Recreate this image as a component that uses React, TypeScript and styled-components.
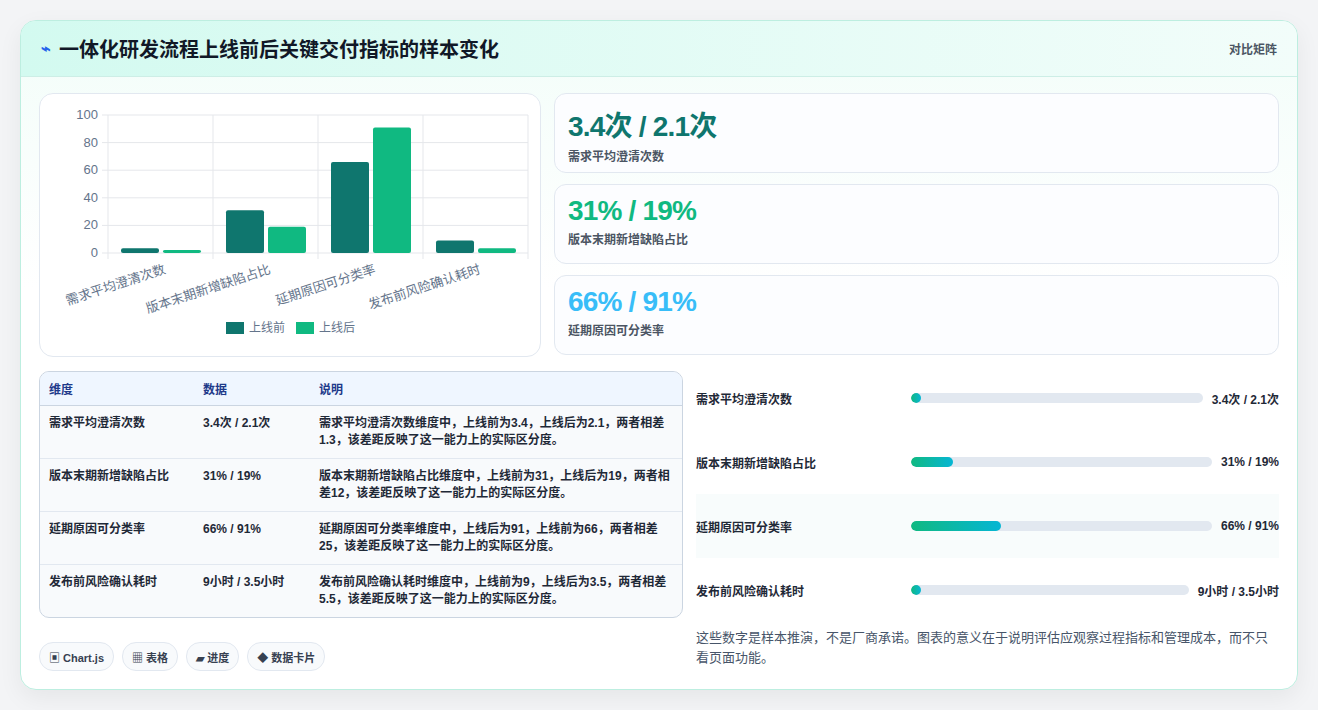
import styled, { createGlobalStyle } from 'styled-components';

const GlobalStyle = createGlobalStyle`
  body {
    margin: 0;
    background: #f3f4f6;
    font-family: "Liberation Sans", "Noto Sans CJK SC", sans-serif;
  }
`;

const rows = [
  { name: '需求平均澄清次数', data: '3.4次 / 2.1次', before: 3.4, after: 2.1, pct: 1, desc: '需求平均澄清次数维度中，上线前为3.4，上线后为2.1，两者相差1.3，该差距反映了这一能力上的实际区分度。' },
  { name: '版本末期新增缺陷占比', data: '31% / 19%', before: 31, after: 19, pct: 14, desc: '版本末期新增缺陷占比维度中，上线前为31，上线后为19，两者相差12，该差距反映了这一能力上的实际区分度。' },
  { name: '延期原因可分类率', data: '66% / 91%', before: 66, after: 91, pct: 30, desc: '延期原因可分类率维度中，上线后为91，上线前为66，两者相差25，该差距反映了这一能力上的实际区分度。' },
  { name: '发布前风险确认耗时', data: '9小时 / 3.5小时', before: 9, after: 3.5, pct: 1, desc: '发布前风险确认耗时维度中，上线前为9，上线后为3.5，两者相差5.5，该差距反映了这一能力上的实际区分度。' },
];

const stats = [
  { value: '3.4次 / 2.1次', label: '需求平均澄清次数', color: '#0f766e' },
  { value: '31% / 19%', label: '版本末期新增缺陷占比', color: '#10b981' },
  { value: '66% / 91%', label: '延期原因可分类率', color: '#38bdf8' },
];

function Chart() {
  const x0 = 68, y0 = 159, w = 420, scale = 1.38;
  const cw = w / 4;
  return (
    <svg width="500" height="262" viewBox="0 0 500 262">
      {[0, 20, 40, 60, 80, 100].map(v => (
        <g key={v}>
          <line x1={x0 - 6} x2={x0 + w} y1={y0 - v * scale} y2={y0 - v * scale} stroke="#e5e7eb" />
          <text x={x0 - 10} y={y0 - v * scale + 4} textAnchor="end" fontSize="13" fill="#64748b">{v}</text>
        </g>
      ))}
      {[0, 1, 2, 3, 4].map(i => (
        <line key={i} x1={x0 + i * cw} x2={x0 + i * cw} y1={y0 - 138} y2={y0 + 6} stroke="#e5e7eb" />
      ))}
      {rows.map((r, i) => {
        const bx = x0 + i * cw + 13;
        const lx = x0 + i * cw + cw / 2 + 6;
        return (
          <g key={r.name}>
            <rect x={bx} y={y0 - r.before * scale} width="38" height={r.before * scale} rx="2" fill="#0f766e" />
            <rect x={bx + 42} y={y0 - r.after * scale} width="38" height={r.after * scale} rx="2" fill="#10b981" />
            <text x={lx} y={y0 + 20} textAnchor="end" fontSize="13" fill="#64748b"
              transform={`rotate(-18 ${lx} ${y0 + 20})`}>{r.name}</text>
          </g>
        );
      })}
      <rect x="186" y="228" width="18" height="12" fill="#0f766e" />
      <text x="209" y="238" fontSize="12" fill="#64748b">上线前</text>
      <rect x="256" y="228" width="18" height="12" fill="#10b981" />
      <text x="279" y="238" fontSize="12" fill="#64748b">上线后</text>
    </svg>
  );
}

export default function App() {
  return (
    <Page>
      <GlobalStyle />
      <Card>
        <Header>
          <Title><Bolt>⌁</Bolt>一体化研发流程上线前后关键交付指标的样本变化</Title>
          <HeaderTag>对比矩阵</HeaderTag>
        </Header>
        <Body>
          <TopRow>
            <ChartPanel><Chart /></ChartPanel>
            <StatList>
              {stats.map(s => (
                <Stat key={s.label}>
                  <StatValue $color={s.color}>{s.value}</StatValue>
                  <StatLabel>{s.label}</StatLabel>
                </Stat>
              ))}
            </StatList>
          </TopRow>
          <BottomRow>
            <LeftCol>
              <Table>
                <colgroup>
                  <col style={{ width: 154 }} />
                  <col style={{ width: 116 }} />
                  <col />
                </colgroup>
                <thead>
                  <tr><Th>维度</Th><Th>数据</Th><Th>说明</Th></tr>
                </thead>
                <tbody>
                  {rows.map(r => (
                    <tr key={r.name}><Td>{r.name}</Td><Td>{r.data}</Td><Td>{r.desc}</Td></tr>
                  ))}
                </tbody>
              </Table>
              <Chips>
                <Chip>▣ Chart.js</Chip>
                <Chip>▦ 表格</Chip>
                <Chip>▰ 进度</Chip>
                <Chip>◆ 数据卡片</Chip>
              </Chips>
            </LeftCol>
            <RightCol>
              <Bars>
                {rows.map((r, i) => (
                  <BarRow key={r.name} $alt={i === 2}>
                    <BarName>{r.name}</BarName>
                    <Track><Fill style={{ width: `${r.pct}%` }} /></Track>
                    <BarValue>{r.data}</BarValue>
                  </BarRow>
                ))}
              </Bars>
              <Note>这些数字是样本推演，不是厂商承诺。图表的意义在于说明评估应观察过程指标和管理成本，而不只看页面功能。</Note>
            </RightCol>
          </BottomRow>
        </Body>
      </Card>
    </Page>
  );
}

const Page = styled.div`
  padding: 20px;
  width: 1278px;
`;

const Card = styled.div`
  background: linear-gradient(180deg, #f2fdf9 0%, #ffffff 40%);
  border: 1px solid #bdeee0;
  border-radius: 16px;
  box-shadow: 0 8px 24px rgba(0, 0, 0, 0.06);
  overflow: hidden;
`;

const Header = styled.div`
  height: 55px;
  display: flex;
  align-items: center;
  justify-content: space-between;
  padding: 0 20px;
  background: linear-gradient(90deg, #d3faf0, #f2fdfa);
  border-bottom: 1px solid #cdeee6;
`;

const Title = styled.div`
  font-size: 20px;
  font-weight: 700;
  color: #111827;
  display: flex;
  align-items: center;
  gap: 8px;
`;

const Bolt = styled.span`
  color: #2563eb;
  font-size: 16px;
  font-weight: 700;
`;

const HeaderTag = styled.div`
  font-size: 12px;
  color: #4b5563;
  font-weight: 600;
`;

const Body = styled.div`
  padding: 16px 18px 18px 18px;
  display: flex;
  flex-direction: column;
  gap: 14px;
`;

const TopRow = styled.div`
  display: flex;
  gap: 13px;
`;

const ChartPanel = styled.div`
  width: 500px;
  height: 262px;
  background: #fff;
  border: 1px solid #e2e8f0;
  border-radius: 14px;
  display: flex;
`;

const StatList = styled.div`
  flex: 1;
  display: flex;
  flex-direction: column;
  gap: 11px;
`;

const Stat = styled.div`
  height: 80px;
  box-sizing: border-box;
  border: 1px solid #e2e8f0;
  border-radius: 12px;
  background: #fcfdff;
  padding: 10px 13px;
`;

const StatValue = styled.div<{ $color: string }>`
  font-size: 28px;
  font-weight: 700;
  letter-spacing: -0.8px;
  color: ${p => p.$color};
`;

const StatLabel = styled.div`
  font-size: 12px;
  color: #4b5563;
  margin-top: 3px;
  font-weight: 600;
`;

const BottomRow = styled.div`
  display: flex;
  gap: 13px;
`;

const LeftCol = styled.div`
  width: 644px;
  display: flex;
  flex-direction: column;
  gap: 24px;
`;

const Table = styled.table`
  width: 100%;
  table-layout: fixed;
  border-collapse: separate;
  border-spacing: 0;
  border: 1px solid #cbd5e1;
  border-radius: 10px;
  overflow: hidden;
  font-size: 12px;
  background: #f8fafc;
`;

const Th = styled.th`
  text-align: left;
  background: #eff6ff;
  color: #1e3a8a;
  font-weight: 700;
  height: 33px;
  padding: 0 9px;
  border-bottom: 1px solid #cbd5e1;
`;

const Td = styled.td`
  vertical-align: top;
  padding: 9px;
  height: 34px;
  line-height: 17px;
  color: #1f2937;
  font-weight: 600;
  border-bottom: 1px solid #e2e8f0;
  tr:last-child & { border-bottom: none; }
`;

const Chips = styled.div`
  display: flex;
  gap: 8px;
`;

const Chip = styled.div`
  height: 27px;
  display: flex;
  align-items: center;
  padding: 0 9px;
  border: 1px solid #e2e8f0;
  border-radius: 14px;
  background: #f8fafc;
  font-size: 11px;
  font-weight: 700;
  color: #374151;
`;

const RightCol = styled.div`
  flex: 1;
  display: flex;
  flex-direction: column;
`;

const Bars = styled.div`
  display: flex;
  flex-direction: column;
  margin-top: -5px;
`;

const BarRow = styled.div<{ $alt: boolean }>`
  height: 64px;
  display: flex;
  align-items: center;
  gap: 8px;
  background: ${p => (p.$alt ? '#f8fcfc' : 'transparent')};
`;

const BarName = styled.div`
  width: 207px;
  font-size: 12px;
  font-weight: 700;
  color: #1f2937;
`;

const Track = styled.div`
  flex: 1;
  height: 10px;
  border-radius: 5px;
  background: #e2e8f0;
  overflow: hidden;
`;

const Fill = styled.div`
  height: 100%;
  min-width: 10px;
  border-radius: 5px;
  background: linear-gradient(90deg, #10b981, #06b6d4);
`;

const BarValue = styled.div`
  font-size: 12px;
  font-weight: 700;
  color: #1f2937;
  white-space: nowrap;
  margin-left: 1px;
`;

const Note = styled.div`
  margin-top: 6px;
  font-size: 13px;
  line-height: 20px;
  color: #475569;
  padding-right: 4px;
`;
